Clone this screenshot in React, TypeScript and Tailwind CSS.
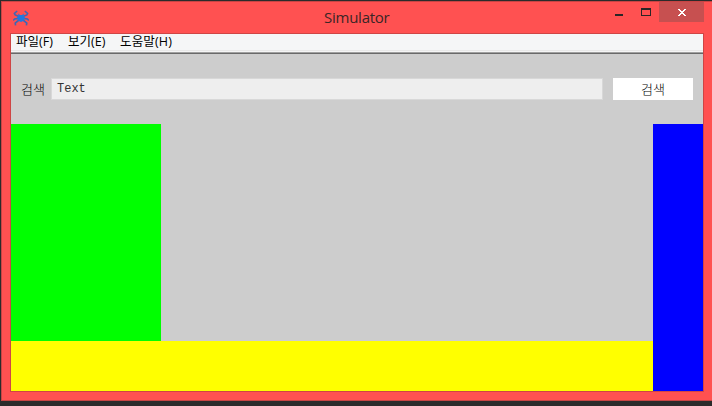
import React from "react";

function AppIcon() {
  return (
    <svg width="16" height="16" viewBox="0 0 16 16" fill="none" className="shrink-0">
      <g stroke="#3f66b4" strokeWidth="1.6">
        <path d="M4.2 1 L1.4 3.4 L2.2 5 L6 6.6" />
        <path d="M11.8 1 L14.6 3.4 L13.8 5 L10 6.6" />
        <path d="M0.2 10.4 L1.6 9 L6 8.4" />
        <path d="M15.8 10.4 L14.4 9 L10 8.4" />
        <path d="M2.6 15.4 L2.2 13 L6 10" />
        <path d="M13.4 15.4 L13.8 13 L10 10" />
      </g>
      <path d="M5.2 3.4 L7 5 H9 L10.8 3.4 L10.6 6 L12 7.8 L10.6 10.8 L8 12 L5.4 10.8 L4 7.8 L5.4 6 Z" fill="#1f78e0" />
    </svg>
  );
}

function TitleBar() {
  return (
    <header className="relative flex h-[31px] shrink-0 items-start">
      <div className="pt-[8px] pl-[11px]">
        <AppIcon />
      </div>
      <h1 className="absolute top-[4px] left-[322px] font-['Open_Sans','Noto_Sans',sans-serif] text-[15px] leading-[22px] text-[#3a2626]">
        <span className="inline-block w-[67px] whitespace-nowrap tracking-[-0.25px]">Simulator</span>
      </h1>
      <div className="ml-auto flex h-[20px] pr-[8px]">
        <div className="flex w-[26px] items-start pt-[12px]">
          <div className="h-[2px] w-[8px] bg-[#2b2626]" />
        </div>
        <div className="flex w-[18px] items-start pt-[6px]">
          <div className="h-[8px] w-[10px] border border-t-2 border-[#2b2626]" />
        </div>
        <div className="flex w-[45px] items-start bg-[#c75050] pt-[7px] pl-[19px]">
          <svg width="8" height="7" viewBox="0 0 8 7" shapeRendering="crispEdges" fill="#fff">
            <path d="M0 0h2v1h1v1h2v-1h1v-1h2v1h-1v1h-1v1h-1v1h1v1h1v1h1v1h-2v-1h-1v-1h-2v1h-1v1h-2v-1h1v-1h1v-1h1v-1h-1v-1h-1v-1h-1z" />
          </svg>
        </div>
      </div>
    </header>
  );
}

function MenuBar() {
  return (
    <nav className="flex h-[20px] shrink-0 flex-col bg-[#f5f6f7]">
      <div className="flex h-[16px] pl-[5px] font-['Open_Sans','Noto_Sans_CJK_KR',sans-serif] text-[12.5px] leading-[15px] text-black">
        <span className="w-[52px] whitespace-nowrap">파일(F)</span>
        <span className="w-[52px] whitespace-nowrap">보기(E)</span>
        <span className="whitespace-nowrap tracking-[0.15px]">도움말(H)</span>
      </div>
      <div className="h-px bg-[#e8e8e8]" />
      <div className="h-px bg-[#f5f5f5]" />
      <div className="h-px bg-[#a0a0a0]" />
      <div className="h-px bg-[#696969]" />
    </nav>
  );
}

export default function App() {
  return (
    <div className="h-[406px] w-[712px] overflow-hidden bg-[#2b2b2b] pt-px pl-px">
      <div className="flex h-[400px] w-[711px] flex-col border border-r-0 border-[#c84444] bg-[#ff5151]">
        <TitleBar />
        <div className="ml-[8px] flex h-[359px] w-[694px] flex-col border border-[#cf4545] bg-[#cdcdcd]">
          <MenuBar />
          <div className="flex h-[70px] shrink-0 items-start pt-[24px] pl-[10px] font-['Noto_Sans_CJK_KR',sans-serif] text-[13px] font-light text-black">
            <span className="w-[30px] leading-[21px] whitespace-nowrap">검색</span>
            <div className="h-[22px] w-[552px] border border-[#d8d8d8] bg-[#eeeeee] pl-[5px] font-['Liberation_Mono',monospace] text-[12px] leading-[20px] font-normal text-[#333]">
              Text
            </div>
            <button className="ml-[10px] h-[22px] w-[80px] bg-white text-center leading-[20px] text-black">검색</button>
          </div>
          <div className="flex min-h-0 flex-1">
            <div className="flex w-[642px] flex-col">
              <div className="h-[217px] w-[150px] bg-[#00ff00]" />
              <div className="h-[50px] bg-[#ffff00]" />
            </div>
            <div className="w-[50px] bg-[#0000ff]" />
          </div>
        </div>
      </div>
    </div>
  );
}
